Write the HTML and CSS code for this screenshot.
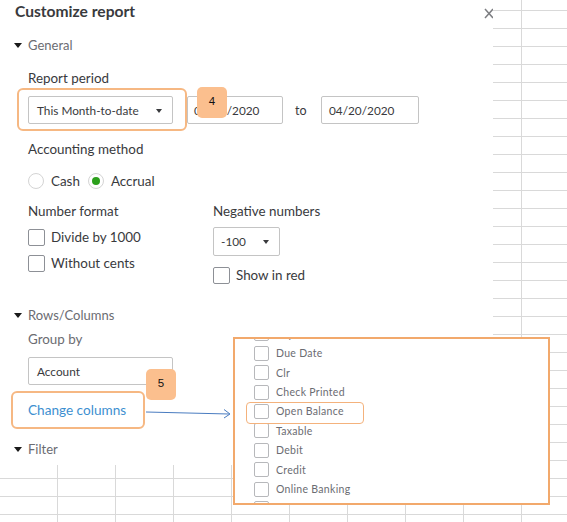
FILE: index.html
```html
<!DOCTYPE html>
<html>
<head>
<meta charset="utf-8">
<link rel="stylesheet" href="styles.css">
</head>
<body>
<div class="panel">
  <div class="title">Customize report</div>
  <span class="close-x"><svg width="10" height="11" viewBox="0 0 10 11"><path d="M1 1 L9 10 M9 1 L1 10" stroke="#7d7e82" stroke-width="1.5" fill="none"/></svg></span>

  <div class="section sec-general"><span class="tri"></span>General</div>
  <div class="label dark lab-period">Report period</div>
  <div class="period-row">
    <div class="select wide">This Month-to-date<span class="caret"></span></div>
    <div class="input date">04/01/2020</div>
    <span class="to">to</span>
    <div class="input date2">04/20/2020</div>
  </div>

  <div class="label dark lab-acct">Accounting method</div>
  <div class="radio-row">
    <span class="radio"></span><span class="rtext">Cash</span>
    <span class="radio on"><span class="dot"></span></span><span class="rtext">Accrual</span>
  </div>

  <div class="two-col">
    <div class="col">
      <div class="label dark">Number format</div>
      <div class="check-row first"><span class="box"></span>Divide by 1000</div>
      <div class="check-row second"><span class="box"></span>Without cents</div>
    </div>
    <div class="col">
      <div class="label dark">Negative numbers</div>
      <div class="select small">-100<span class="caret"></span></div>
      <div class="check-row red"><span class="box"></span>Show in red</div>
    </div>
  </div>

  <div class="section sec-rows"><span class="tri"></span>Rows/Columns</div>
  <div class="label gray lab-group">Group by</div>
  <div class="input account">Account</div>
  <div class="link">Change columns</div>
  <div class="section sec-filter"><span class="tri"></span>Filter</div>
</div>

<div class="hl hl-period"></div>
<div class="badge badge-4">4</div>
<div class="hl hl-change"></div>
<div class="badge badge-5">5</div>

<svg class="arrow" width="90" height="12" viewBox="0 0 90 12">
  <path d="M0 5 L83 7" stroke="#4a7cc0" stroke-width="1" fill="none"/>
  <path d="M78 2.5 L84 7 L78 11" stroke="#4a7cc0" stroke-width="1" fill="none"/>
</svg>

<div class="popup">
  <ul class="cols">
    <li><span class="box sm"></span>Payment Method</li>
    <li><span class="box sm"></span>Due Date</li>
    <li><span class="box sm"></span>Clr</li>
    <li><span class="box sm"></span>Check Printed</li>
    <li><span class="box sm"></span>Open Balance</li>
    <li><span class="box sm"></span>Taxable</li>
    <li><span class="box sm"></span>Debit</li>
    <li><span class="box sm"></span>Credit</li>
    <li><span class="box sm"></span>Online Banking</li>
    <li><span class="box sm"></span>Amount</li>
  </ul>
  <div class="hl-open"></div>
</div>
</body>
</html>
```

FILE: styles.css
```css
html, body {
  margin: 0;
  padding: 0;
}
body {
  width: 567px;
  height: 522px;
  overflow: hidden;
  position: relative;
  font-family: "Lato", "Noto Sans", sans-serif;
  color: #393a3d;
  background-color: #ffffff;
  background-image:
    linear-gradient(to right, #d9d9d9 1px, transparent 1px),
    linear-gradient(to bottom, #d9d9d9 1px, transparent 1px);
  background-size: 58px 100%, 100% 18px;
  background-position: 57px 0, 0 10px;
}
.panel {
  position: relative;
  width: 493px;
  height: 465px;
  background: #fff;
  box-sizing: border-box;
  padding: 0 0 0 28px;
  overflow: hidden;
}
.title {
  margin-left: -13px;
  height: 22px;
  line-height: 22px;
  font-size: 15.6px;
  font-weight: 700;
  color: #393a3d;
}
.close-x {
  position: absolute;
  left: 484px;
  top: 3px;
}
.section {
  position: relative;
  height: 18px;
  line-height: 18px;
  font-size: 13px;
  color: #6b6c72;
}
.sec-general { margin-top: 14px; }
.tri {
  position: absolute;
  left: -14px;
  top: 7px;
  width: 0;
  height: 0;
  border-left: 4px solid transparent;
  border-right: 4px solid transparent;
  border-top: 5px solid #1a1a1a;
}
.label {
  height: 18px;
  line-height: 18px;
  font-size: 13.4px;
}
.dark { color: #393a3d; }
.gray { color: #6b6c72; }
.lab-period { margin-top: 15px; }
.period-row {
  display: flex;
  align-items: center;
  margin-top: 9px;
  height: 28px;
}
.select, .input {
  box-sizing: border-box;
  height: 28px;
  border: 1px solid #c4c4c4;
  border-radius: 2px;
  font-size: 11.8px;
  color: #393a3d;
  padding-left: 8px;
  display: flex;
  align-items: center;
  position: relative;
}
.select.wide { width: 145px; }
.caret {
  position: absolute;
  right: 10px;
  top: 12px;
  width: 0;
  height: 0;
  border-left: 3.5px solid transparent;
  border-right: 3.5px solid transparent;
  border-top: 4.5px solid #393a3d;
}
.input.date { width: 96px; margin-left: 14px; padding-left: 6px; }
.to { margin-left: 12px; width: 26px; font-size: 12.5px; }
.input.date2 { width: 98px; padding-left: 7px; }
.lab-acct { margin-top: 16px; }
.radio-row {
  display: flex;
  align-items: center;
  margin-top: 14px;
  height: 17px;
  font-size: 13.4px;
}
.radio {
  box-sizing: border-box;
  width: 16px;
  height: 16px;
  border: 1px solid #d4d4d4;
  border-radius: 50%;
  display: inline-flex;
  align-items: center;
  justify-content: center;
}
.radio.on { margin-left: 8px; }
.dot {
  width: 8px;
  height: 8px;
  border-radius: 50%;
  background: #2ca01c;
}
.rtext { margin-left: 7px; }
.two-col {
  display: grid;
  grid-template-columns: 185px auto;
  margin-top: 13px;
}
.check-row {
  display: flex;
  align-items: center;
  height: 18px;
  font-size: 13.4px;
  color: #393a3d;
}
.check-row.first { margin-top: 8px; }
.check-row.second { margin-top: 8px; }
.check-row.red { margin-top: 10px; }
.box {
  box-sizing: border-box;
  width: 17px;
  height: 17px;
  border: 1px solid #8d9096;
  border-radius: 2px;
  margin-right: 6px;
  flex: none;
}
.select.small {
  width: 67px;
  height: 29px;
  margin-top: 7px;
  padding-left: 7px;
}
.select.small .caret { right: 10px; top: 12px; }
.sec-rows { margin-top: 22px; }
.lab-group { margin-top: 6px; }
.input.account {
  width: 145px;
  margin-top: 9px;
}
.link {
  margin-top: 16px;
  height: 18px;
  line-height: 18px;
  font-size: 13.6px;
  color: #3d8fd0;
}
.sec-filter { margin-top: 21px; }

.hl {
  position: absolute;
  box-sizing: border-box;
  border: 2px solid #f6b883;
  border-radius: 6px;
}
.hl-period { left: 17px; top: 88px; width: 170px; height: 43px; }
.hl-change { left: 11px; top: 391px; width: 134px; height: 38px; }
.badge {
  position: absolute;
  width: 30px;
  height: 31px;
  border-radius: 5px;
  background: #fbbf8e;
  color: #111;
  font-family: "Liberation Sans", Arial, sans-serif;
  font-size: 11.5px;
  display: flex;
  justify-content: center;
  padding-top: 8px;
  box-sizing: border-box;
}
.badge-4 { left: 197px; top: 87px; }
.badge-5 { left: 146px; top: 369px; }
.arrow {
  position: absolute;
  left: 146px;
  top: 407px;
}
.popup {
  position: absolute;
  left: 233px;
  top: 337px;
  width: 317px;
  height: 168px;
  box-sizing: border-box;
  border: 2px solid #f2a96c;
  background: #fff;
  overflow: hidden;
}
.cols {
  list-style: none;
  margin: -15px 0 0 0;
  padding: 0 0 0 19px;
}
.cols li {
  display: flex;
  align-items: center;
  height: 19.45px;
  font-size: 10.5px;
  letter-spacing: 0.3px;
  color: #6b6c72;
}
.box.sm {
  width: 15px;
  height: 15px;
  border: 1px solid #b7b8bb;
  margin-right: 7px;
}
.hl-open {
  position: absolute;
  left: 11px;
  top: 63px;
  width: 118px;
  height: 22px;
  box-sizing: border-box;
  border: 1.5px solid #f4b27c;
  border-radius: 4px;
}
```
